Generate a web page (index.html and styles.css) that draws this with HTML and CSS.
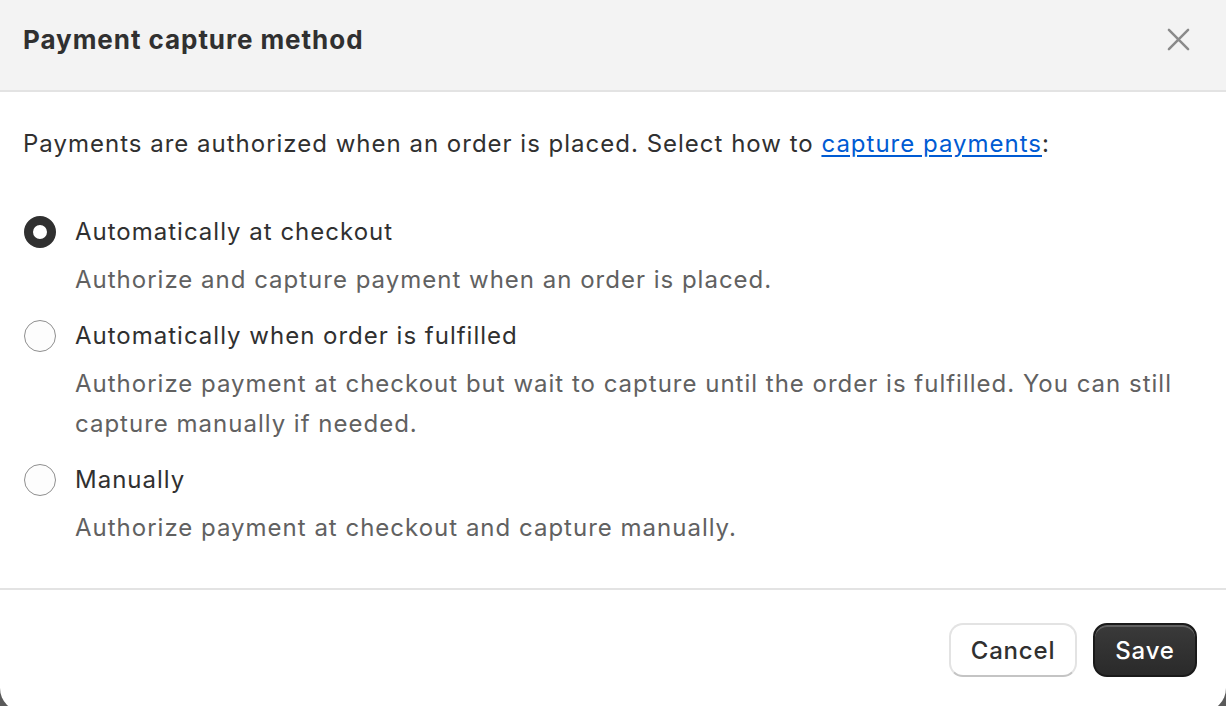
FILE: index.html
```html
<!DOCTYPE html>
<html lang="en">
<head>
  <meta charset="UTF-8">
  <title>Payment capture method</title>
  <link rel="stylesheet" href="styles.css">
</head>
<body>
  <div class="modal">
    <div class="modal-header">
      <h2 class="modal-title">Payment capture method</h2>
      <button class="close-btn" aria-label="Close">
        <svg viewBox="0 0 24 24" width="23" height="23">
          <path d="M2 2 L22 22 M22 2 L2 22" stroke="currentColor" stroke-width="2.6" stroke-linecap="round" fill="none"/>
        </svg>
      </button>
    </div>

    <div class="modal-body">
      <p class="intro">Payments are authorized when an order is placed. Select how to <a href="#">capture payments</a>:</p>

      <div class="options">
        <label class="option">
          <span class="option-row">
            <input type="radio" name="capture" checked>
            <span class="option-label">Automatically at checkout</span>
          </span>
          <span class="option-help">Authorize and capture payment when an order is placed.</span>
        </label>

        <label class="option">
          <span class="option-row">
            <input type="radio" name="capture">
            <span class="option-label">Automatically when order is fulfilled</span>
          </span>
          <span class="option-help">Authorize payment at checkout but wait to capture until the order is fulfilled. You can still capture manually if needed.</span>
        </label>

        <label class="option">
          <span class="option-row">
            <input type="radio" name="capture">
            <span class="option-label">Manually</span>
          </span>
          <span class="option-help">Authorize payment at checkout and capture manually.</span>
        </label>
      </div>
    </div>

    <div class="modal-footer">
      <button class="btn btn-secondary">Cancel</button>
      <button class="btn btn-primary">Save</button>
    </div>
  </div>
</body>
</html>
```

FILE: styles.css
```css
:root {
  --text: #303030;
  --text-muted: #616161;
  --border: #e3e3e3;
  --link: #005bd3;
}

body {
  margin: 0;
  background: #5a5a5a;
  font-family: Inter, "Noto Sans", sans-serif;
  color: var(--text);
  overflow: hidden;
}

.modal {
  background: #fff;
  height: 712px;
  border-radius: 0 0 24px 24px;
  overflow: hidden;
}

.modal-header {
  display: flex;
  align-items: center;
  justify-content: space-between;
  height: 92px;
  padding: 0 36px 12px 23px;
  background: #f3f3f3;
  border-bottom: 2px solid var(--border);
  box-sizing: border-box;
}

.modal-title {
  margin: 0;
  font-size: 26px;
  font-weight: 650;
  letter-spacing: 0.95px;
}

.close-btn {
  border: none;
  background: none;
  padding: 0;
  color: #8a8a8a;
  display: flex;
  cursor: pointer;
}

.modal-body {
  padding: 32px 23px 40px;
  font-size: 24px;
  line-height: 40px;
  letter-spacing: 1px;
}

.intro {
  margin: 0 0 48px;
}

.intro a {
  color: var(--link);
  text-decoration: underline;
  text-underline-offset: 3px;
}

.options {
  display: flex;
  flex-direction: column;
  gap: 16px;
}

.option {
  display: flex;
  flex-direction: column;
  gap: 8px;
}

.option-row {
  display: flex;
  align-items: center;
  gap: 19px;
}

.option-help {
  color: var(--text-muted);
  padding-left: 52px;
}

.option input {
  appearance: none;
  margin: 0 0 0 1px;
  width: 32px;
  height: 32px;
  border-radius: 50%;
  border: 1.5px solid #8f8f8f;
  background: #fdfdfd;
  box-sizing: border-box;
}

.option input:checked {
  border: 9px solid var(--text);
  background: #fff;
}

.modal-footer {
  display: flex;
  justify-content: flex-end;
  gap: 16px;
  padding: 33px 29px;
  border-top: 2px solid var(--border);
}

.btn {
  font-family: inherit;
  font-size: 24px;
  font-weight: 550;
  letter-spacing: 0.8px;
  height: 54px;
  border-radius: 14px;
  padding: 0;
  cursor: pointer;
}

.btn-secondary {
  background: #fff;
  color: var(--text);
  border: 2px solid var(--border);
  border-bottom-color: #c4c4c4;
  width: 128px;
}

.btn-primary {
  background: linear-gradient(#3a3a3a, #2a2a2a);
  color: #fff;
  border: 2px solid #1a1a1a;
  box-shadow: inset 0 2px 0 rgba(255, 255, 255, 0.2);
  width: 104px;
}
```
